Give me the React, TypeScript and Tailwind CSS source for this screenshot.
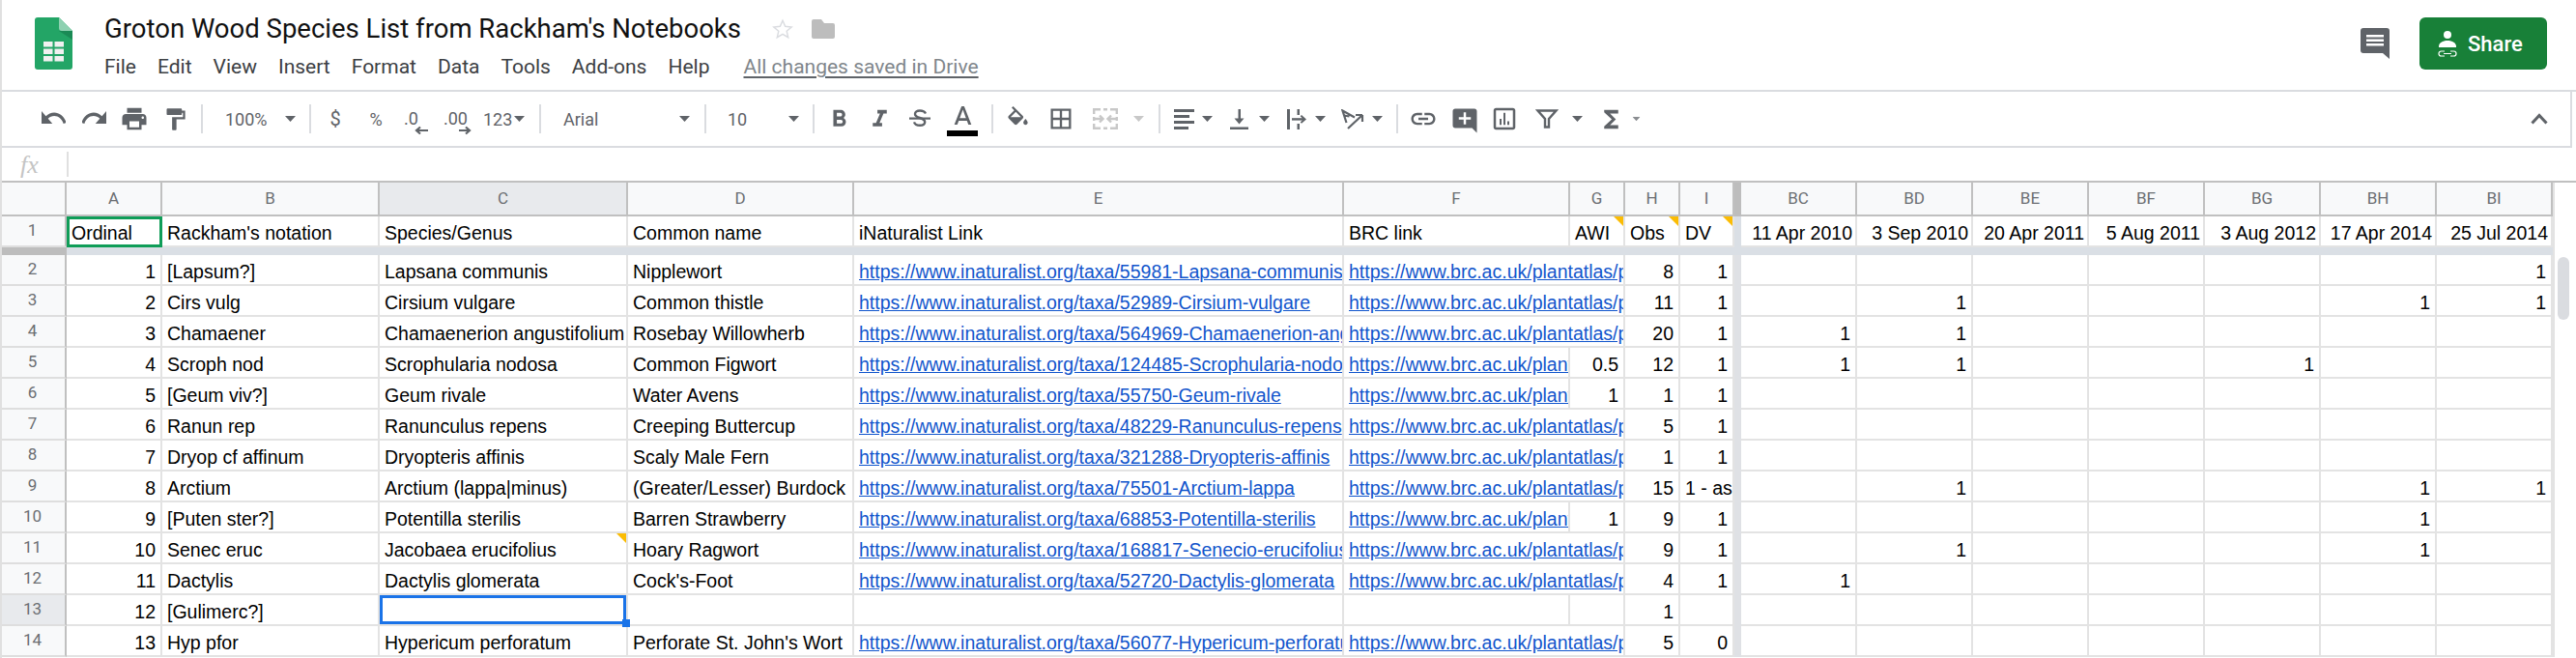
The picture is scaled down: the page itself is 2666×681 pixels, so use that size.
import React from "react";

const ICON = "#5f6368";
const P = ({ d, size = 29, fill = ICON, className = "" }: { d: string; size?: number; fill?: string; className?: string }) => (
  <svg width={size} height={size} viewBox="0 0 24 24" className={className}><path d={d} fill={fill} /></svg>
);
const Caret = ({ fill = ICON, className = "" }: { fill?: string; className?: string }) => (
  <svg width="11" height="6" viewBox="0 0 11 6" className={`shrink-0 ${className}`}><path d="M0 0h11L5.5 6z" fill={fill} /></svg>
);
const Sep = ({ className }: { className: string }) => <div className={`w-[2px] h-[30px] bg-[#dadce0] shrink-0 ${className}`} />;
const Btn = ({ children, className = "" }: { children: React.ReactNode; className?: string }) => (
  <div className={`w-[42px] h-[42px] flex items-center justify-center shrink-0 ${className}`}>{children}</div>
);
const Slot = ({ children, className = "" }: { children: React.ReactNode; className?: string }) => (
  <div className={`w-[30px] h-[42px] flex items-center justify-center shrink-0 ${className}`}>{children}</div>
);

function Toolbar() {
  return (
    <div className="h-[58px] mr-[4px] flex items-center pl-[34px] pr-[23px] border-b-2 border-r-2 border-[#dadce0] text-[18px] text-[#5f6368] font-['Roboto',sans-serif]">
      <Btn><svg width="25" height="16" viewBox="2 7 20 11" preserveAspectRatio="none"><path fill={ICON} d="M12.5 8c-2.65 0-5.05.99-6.9 2.6L2 7v9h9l-3.62-3.62c1.39-1.16 3.16-1.88 5.12-1.88 3.54 0 6.55 2.31 7.6 5.5l2.37-.78C21.08 11.03 17.15 8 12.5 8z" /></svg></Btn>
      <Btn><svg width="25" height="16" viewBox="2 7 20 11" preserveAspectRatio="none" className="-scale-x-100"><path fill={ICON} d="M12.5 8c-2.65 0-5.05.99-6.9 2.6L2 7v9h9l-3.62-3.62c1.39-1.16 3.16-1.88 5.12-1.88 3.54 0 6.55 2.31 7.6 5.5l2.37-.78C21.08 11.03 17.15 8 12.5 8z" /></svg></Btn>
      <Btn><P size={30} d="M19 8H5c-1.66 0-3 1.34-3 3v6h4v4h12v-4h4v-6c0-1.66-1.34-3-3-3zm-3 11H8v-5h8v5zm3-7c-.55 0-1-.45-1-1s.45-1 1-1 1 .45 1 1-.45 1-1 1zm-1-9H6v4h12V3z" /></Btn>
      <Btn><P size={27} d="M18 4V3c0-.55-.45-1-1-1H5c-.55 0-1 .45-1 1v4c0 .55.45 1 1 1h12c.55 0 1-.45 1-1V6h1v4H9v11c0 .55.45 1 1 1h2c.55 0 1-.45 1-1v-9h8V4h-3z" /></Btn>
      <Sep className="ml-[6px]" />
      <span className="ml-[23px] w-[43px]">100%</span>
      <Caret className="ml-[19px]" />
      <Sep className="ml-[14px]" />
      <Btn className="ml-[4px]"><span className="text-[20px]">$</span></Btn>
      <Btn><span className="text-[18px]">%</span></Btn>
      <Btn>
        <svg width="26" height="36" viewBox="0 0 26 36"><text x="0" y="24" fontSize="18" fill={ICON} fontFamily="Roboto">.0</text><path d="M25 30H13M17 26.500l-4 3.500 4 3.500" stroke={ICON} strokeWidth="2.200" fill="none" /></svg>
      </Btn>
      <Btn>
        <svg width="30" height="36" viewBox="0 0 30 36"><text x="1" y="24" fontSize="18" fill={ICON} fontFamily="Roboto">.00</text><path d="M17 30h11M24 26.500l4 3.500-4 3.500" stroke={ICON} strokeWidth="2.200" fill="none" /></svg>
      </Btn>
      <span className="ml-[6px] w-[31px]">123</span>
      <Caret className="ml-[1px]" />
      <Sep className="ml-[15px]" />
      <span className="ml-[23px] w-[38px]">Arial</span>
      <Caret className="ml-[82px]" />
      <Sep className="ml-[15px]" />
      <span className="ml-[22px] w-[20px]">10</span>
      <Caret className="ml-[43px]" />
      <Sep className="ml-[14px]" />
      <Btn className="ml-[4px]"><P size={29} d="M15.6 10.79c.97-.67 1.65-1.77 1.65-2.79 0-2.26-1.75-4-4-4H7v14h7.04c2.09 0 3.71-1.7 3.71-3.79 0-1.52-.86-2.82-2.15-3.42zM10 6.5h3c.83 0 1.5.67 1.5 1.5s-.67 1.5-1.5 1.5h-3v-3zm3.5 9H10v-3h3.5c.83 0 1.5.67 1.5 1.5s-.67 1.5-1.5 1.5z" /></Btn>
      <Btn><P size={29} d="M10 4v3h2.21l-3.42 8H6v3h8v-3h-2.21l3.42-8H18V4z" /></Btn>
      <Btn>
        <svg width="24" height="24" viewBox="0 0 24 24"><path d="M18 6.5C17 4.5 15 3.5 12 3.5c-3 0-5 1.4-5 3.6 0 2 1.5 3 5 3.9 3.5 1 5.2 2 5.2 4.2 0 2.2-2.2 3.6-5.2 3.6-3 0-5.2-1.2-6-3.4" stroke={ICON} strokeWidth="2.4" fill="none" /><rect x="1" y="10.5" width="22" height="2.2" fill={ICON} /></svg>
      </Btn>
      <div className="w-[42px] h-[42px] relative ml-[2px] shrink-0 flex justify-center">
        <svg width="19" height="19" viewBox="5 3 14 14" className="mt-[8px]"><path fill={ICON} d="M11 3L5.5 17h2.25l1.12-3h6.25l1.12 3h2.25L13 3h-2zm-1.38 9L12 5.67 14.38 12H9.62z" /></svg>
        <div className="absolute left-[5px] bottom-[3px] w-[32px] h-[6px] bg-black" />
      </div>
      <Sep className="ml-[9px]" />
      <Btn className="ml-[4px]"><P size={27} d="M16.56 8.94L7.62 0 6.21 1.41l2.38 2.38-5.15 5.15c-.59.59-.59 1.54 0 2.12l5.5 5.5c.29.29.68.44 1.06.44s.77-.15 1.06-.44l5.5-5.5c.59-.58.59-1.53 0-2.12zM5.21 10L10 5.21 14.79 10H5.21zM19 11.5s-2 2.17-2 3.5c0 1.1.9 2 2 2s2-.9 2-2c0-1.33-2-3.5-2-3.5z" /></Btn>
      <Btn className="ml-[3px]"><P size={28} d="M3 3v18h18V3H3zm8 16H5v-6h6v6zm0-8H5V5h6v6zm8 8h-6v-6h6v6zm0-8h-6V5h6v6z" /></Btn>
      <Btn className="ml-[4px]">
        <svg width="26" height="22" viewBox="0 0 26 22" fill="none" stroke="#c8c8c8" strokeWidth="2.4"><path d="M8 1.2H1.2V6M1.2 9v4M1.2 16v4.8H8M18 1.2h6.8V6M24.8 9v4M24.8 16v4.8H18M2 11h8M7 7.5l3.5 3.5L7 14.5M24 11h-8M19 7.5L15.5 11l3.5 3.5M11 1.2h4M11 20.8h4" /></svg>
      </Btn>
      <Caret fill="#c8c8c8" className="ml-[8px]" />
      <Sep className="ml-[15px]" />
      <Slot className="ml-[9px]">
        <svg width="21" height="21" viewBox="0 0 21 21" fill={ICON}><rect x="0" y="0" width="21" height="3" /><rect x="0" y="6" width="16" height="3" /><rect x="0" y="12" width="21" height="3" /><rect x="0" y="18" width="15" height="3" /></svg>
      </Slot>
      <Caret className="ml-[4px]" />
      <Slot className="ml-[12px]">
        <svg width="19" height="21" viewBox="0 0 19 21" fill={ICON}><rect x="0" y="18.5" width="19" height="2.5" /><rect x="8.5" y="0" width="2.5" height="12" /><path d="M4.5 9.5h10L9.5 15.5z" /></svg>
      </Slot>
      <Caret className="ml-[6px]" />
      <Slot className="ml-[13px]">
        <svg width="21" height="21" viewBox="0 0 21 21" fill={ICON}><rect x="0" y="0" width="3" height="21" /><rect x="10.500" y="0" width="2.500" height="6" /><rect x="10.500" y="15" width="2.500" height="6" /><rect x="5" y="9.2" width="12" height="2.400" /><path d="M15 6l5 4.400-5 4.400-1.300-1.300 3-3.100-3-3.100z" /></svg>
      </Slot>
      <Caret className="ml-[4px]" />
      <Slot className="ml-[13px]">
        <svg width="24" height="21" viewBox="0 0 24 21" fill="none" stroke={ICON} strokeWidth="2.2"><path d="M7 20L22 6M22 6h-7M22 6v7" /><path d="M14 8.500L1.500 1.500 5.500 14M3 6.500l5.500 1" /></svg>
      </Slot>
      <Caret className="ml-[5px]" />
      <Sep className="ml-[14px]" />
      <Slot className="ml-[11px]"><P size={32} d="M3.9 12c0-1.71 1.39-3.1 3.1-3.1h4V7H7c-2.76 0-5 2.24-5 5s2.24 5 5 5h4v-1.9H7c-1.71 0-3.1-1.39-3.1-3.1zM8 13h8v-2H8v2zm9-6h-4v1.9h4c1.71 0 3.1 1.39 3.1 3.1s-1.39 3.1-3.1 3.1h-4V17h4c2.76 0 5-2.24 5-5s-2.24-5-5-5z" /></Slot>
      <Slot className="ml-[13px]"><P size={30} className="shrink-0 mt-[4px]" d="M21.99 4c0-1.1-.89-2-1.99-2H4c-1.1 0-2 .9-2 2v12c0 1.1.9 2 2 2h14l4 4-.01-18zM17 11h-4v4h-2v-4H7V9h4V5h2v4h4v2z" /></Slot>
      <Slot className="ml-[11px]"><P size={30} d="M19 3H5c-1.1 0-2 .9-2 2v14c0 1.1.9 2 2 2h14c1.1 0 2-.9 2-2V5c0-1.1-.9-2-2-2zm0 16H5V5h14v14zM8 12h1.6v5H8zm3.2-5h1.6v10h-1.6zm3.2 7H16v3h-1.6z" /></Slot>
      <Slot className="ml-[14px]">
        <svg width="24" height="24" viewBox="0 0 24 24" fill="none" stroke={ICON} strokeWidth="2.4"><path d="M2.5 3.5h19L14 12v8.5h-4V12z" /></svg>
      </Slot>
      <Caret className="ml-[11px]" />
      <Slot className="ml-[14px]"><P size={29} d="M18 4H6v2l6.5 6L6 18v2h12v-3h-7l5-5-5-5h7z" /></Slot>
      <Caret fill="#8a8d91" className="ml-[6px] scale-75" />
      <svg width="18" height="12" viewBox="0 0 18 12" className="ml-auto"><path d="M1.5 10.5L9 2.5l7.5 8" stroke={ICON} strokeWidth="3" fill="none" /></svg>
    </div>
  );
}

function TopBar() {
  return (
    <div className="h-[95px] flex border-b-2 border-[#dadce0] font-['Roboto',sans-serif]">
      <div className="w-[108px] shrink-0 pl-[36px] pt-[18px]">
        <svg width="39" height="54" viewBox="0 0 39 54">
          <path d="M3 0h22l14 14v37a3 3 0 0 1-3 3H3a3 3 0 0 1-3-3V3a3 3 0 0 1 3-3z" fill="#23a566" />
          <path d="M25 14l14 9v-9z" fill="#1a8a55" />
          <path d="M25 0l14 14H28a3 3 0 0 1-3-3z" fill="#8ed1b1" />
          <path fill="#f1f1f1" d="M9 25h9.5v5.5H9zM20.5 25H30v5.5h-9.5zM9 32.5h9.5V38H9zM20.5 32.5H30V38h-9.5zM9 40h9.5v5.5H9zM20.5 40H30v5.5h-9.5z" />
        </svg>
      </div>
      <div className="flex flex-col pt-[12px]">
        <div className="flex items-center h-[36px]">
          <span className="text-[27.5px] text-[#111] w-[657px] whitespace-nowrap">Groton Wood Species List from Rackham's Notebooks</span>
          <svg width="22" height="22" viewBox="0 0 24 24" className="ml-[34px]"><path d="M12 2.5l2.9 6.6 7.1.7-5.4 4.7 1.6 7-6.2-3.7-6.2 3.7 1.6-7L2 9.8l7.1-.7z" fill="none" stroke="#dadce0" strokeWidth="1.6" /></svg>
          <svg width="24" height="20" viewBox="0 0 24 20" className="ml-[19px]"><path d="M2 0h8l3 4h9a2 2 0 0 1 2 2v12a2 2 0 0 1-2 2H2a2 2 0 0 1-2-2V2a2 2 0 0 1 2-2z" fill="#bdbdbd" /></svg>
        </div>
        <div className="flex items-center h-[30px] mt-[7px] text-[21px] text-[#3c4043] gap-[22px] whitespace-nowrap">
          <span>File</span><span>Edit</span><span>View</span><span>Insert</span><span>Format</span><span>Data</span><span>Tools</span><span>Add-ons</span><span>Help</span>
          <span className="ml-[13px] text-[#80868b] underline decoration-[#5f6368] decoration-2 underline-offset-[3px]">All changes saved in Drive</span>
        </div>
      </div>
      <div className="ml-auto flex items-start pt-[18px] pr-[30px]">
        <svg width="30" height="32" viewBox="0 0 30 32" className="mt-[11px]">
          <path d="M3 0h24a3 3 0 0 1 3 3v29l-7-6H3a3 3 0 0 1-3-3V3a3 3 0 0 1 3-3z" fill={ICON} />
          <path d="M6 7h18v2.4H6zM6 11.5h18v2.4H6zM6 16h18v2.4H6z" fill="#fff" />
        </svg>
        <div className="ml-[31px] w-[132px] h-[54px] bg-[#188038] rounded-[6px] flex items-center text-white text-[22px] font-medium">
          <svg width="22" height="28" viewBox="0 0 22 28" className="ml-[18px]" fill="#fff">
            <circle cx="11" cy="5" r="4" />
            <path d="M2 17c0-3.5 4-6 9-6s9 2.500 9 6v1H2z" />
            <path d="M8 22H4.500a2.300 2.300 0 0 0 0 5H8M14 22h3.500a2.300 2.300 0 0 1 0 5H14M7 24.500h8" fill="none" stroke="#fff" strokeWidth="1.2" />
          </svg>
          <span className="ml-[10px]">Share</span>
        </div>
      </div>
    </div>
  );
}

type Row = {
  b: string; c: string; d: string; e?: string; f?: string; g?: string; h: string; i?: string; dates?: number[]; note?: boolean;
};
const INAT = "https://www.inaturalist.org/taxa/";
const BRC = "https://www.brc.ac.uk/plantatlas/plant/";
const rows: Row[] = [
  { b: "[Lapsum?]", c: "Lapsana communis", d: "Nipplewort", e: "55981-Lapsana-communis", f: "lapsana-communis", h: "8", i: "1", dates: [6] },
  { b: "Cirs vulg", c: "Cirsium vulgare", d: "Common thistle", e: "52989-Cirsium-vulgare", f: "cirsium-vulgare", h: "11", i: "1", dates: [1, 5, 6] },
  { b: "Chamaener", c: "Chamaenerion angustifolium", d: "Rosebay Willowherb", e: "564969-Chamaenerion-angustifolium", f: "chamerion-angustifolium", h: "20", i: "1", dates: [0, 1] },
  { b: "Scroph nod", c: "Scrophularia nodosa", d: "Common Figwort", e: "124485-Scrophularia-nodosa", f: "scrophularia-nodosa", g: "0.5", h: "12", i: "1", dates: [0, 1, 4] },
  { b: "[Geum viv?]", c: "Geum rivale", d: "Water Avens", e: "55750-Geum-rivale", f: "geum-rivale", g: "1", h: "1", i: "1" },
  { b: "Ranun rep", c: "Ranunculus repens", d: "Creeping Buttercup", e: "48229-Ranunculus-repens", f: "ranunculus-repens", h: "5", i: "1" },
  { b: "Dryop cf affinum", c: "Dryopteris affinis", d: "Scaly Male Fern", e: "321288-Dryopteris-affinis", f: "dryopteris-affinis", h: "1", i: "1" },
  { b: "Arctium", c: "Arctium (lappa|minus)", d: "(Greater/Lesser) Burdock", e: "75501-Arctium-lappa", f: "arctium-lappa", h: "15", i: "1 - as", dates: [1, 5, 6] },
  { b: "[Puten ster?]", c: "Potentilla sterilis", d: "Barren Strawberry", e: "68853-Potentilla-sterilis", f: "potentilla-sterilis", g: "1", h: "9", i: "1", dates: [5] },
  { b: "Senec eruc", c: "Jacobaea erucifolius", d: "Hoary Ragwort", e: "168817-Senecio-erucifolius", f: "senecio-erucifolius", h: "9", i: "1", dates: [1, 5], note: true },
  { b: "Dactylis", c: "Dactylis glomerata", d: "Cock's-Foot", e: "52720-Dactylis-glomerata", f: "dactylis-glomerata", h: "4", i: "1", dates: [0] },
  { b: "[Gulimerc?]", c: "", d: "", h: "1" },
  { b: "Hyp pfor", c: "Hypericum perforatum", d: "Perforate St. John's Wort", e: "56077-Hypericum-perforatum", f: "hypericum-perforatum", h: "5", i: "0" },
];
const dateHeads = ["BC", "BD", "BE", "BF", "BG", "BH", "BI"];
const dateVals = ["11 Apr 2010", "3 Sep 2010", "20 Apr 2011", "5 Aug 2011", "3 Aug 2012", "17 Apr 2014", "25 Jul 2014"];

const base = "border-r-2 border-b-2 border-[#e3e3e3] pl-[5px] pb-[1px] flex items-end whitespace-nowrap leading-[24px] relative";
const cell = `${base} pr-[5px] overflow-hidden`;
const num = `${cell} justify-end`;
const dateCell = `${base} pr-[3px] overflow-hidden justify-end`;
const head = "border-r-2 border-b-2 border-[#c0c0c0] bg-[#f8f9fa] flex items-center justify-center text-[17px] text-[#6b6e72] font-['Roboto',sans-serif]";
const rowHead = "border-r-2 border-b-2 border-r-[#c0c0c0] border-b-[#dedede] bg-[#f8f9fa] flex items-center justify-center text-[17px] text-[#6b6e72] font-['Roboto',sans-serif]";
const Note = () => <div className="absolute top-0 right-0 w-[10px] h-[10px] bg-[#fbbc04] [clip-path:polygon(0_0,100%_0,100%_100%)]" />;
const Link = ({ href }: { href: string }) => <span className="text-[#1155cc] underline">{href}</span>;

function Sheet() {
  return (
    <div className="flex">
      <div className="grid w-[2642px] grid-cols-[69px_99px_225px_257px_234px_507px_234px_57px_57px_56px_7px_repeat(7,120px)] grid-rows-[35px_32px_8px_repeat(13,32px)] text-[19.5px] text-black font-['Liberation_Sans',Arial,sans-serif]">
        <div className={head} />
        {["A", "B", "C", "D", "E", "F", "G", "H", "I"].map((l) => (
          <div key={l} className={l === "C" ? "border-r-2 border-b-2 border-[#c0c0c0] bg-[#e8eaed] flex items-center justify-center text-[17px] text-[#6b6e72] font-['Roboto',sans-serif]" : head}>{l}</div>
        ))}
        <div className="bg-[#bdbdbd] border-b-2 border-[#bdbdbd]" />
        {dateHeads.map((l) => <div key={l} className={head}>{l}</div>)}

        <div className={rowHead}>1</div>
        <div className={`${cell} outline-[3px] outline-[#0f9d58] -outline-offset-[3px]`}>Ordinal</div>
        <div className={cell}>Rackham's notation</div>
        <div className={cell}>Species/Genus</div>
        <div className={cell}>Common name</div>
        <div className={cell}>iNaturalist Link</div>
        <div className={cell}>BRC link</div>
        <div className={cell}>AWI<Note /></div>
        <div className={cell}>Obs<Note /></div>
        <div className={cell}>DV<Note /></div>
        <div className="bg-[#dadfe5]" />
        {dateVals.map((d) => <div key={d} className={dateCell}>{d}</div>)}

        <div className="bg-[#bdbdbd]" />
        <div className="col-span-17 bg-[#dadfe5]" />

        {rows.map((r, idx) => {
          const sel = idx === 11;
          return (
            <React.Fragment key={idx}>
              <div className={sel ? "border-r-2 border-b-2 border-r-[#c0c0c0] border-b-[#dedede] bg-[#e8eaed] flex items-center justify-center text-[17px] text-[#6b6e72] font-['Roboto',sans-serif]" : rowHead}>{idx + 2}</div>
              <div className={num}>{idx + 1}</div>
              <div className={cell}>{r.b}</div>
              {sel ? (
                <div className={`${base} pr-[5px] z-10`}>
                  <div className="absolute inset-0 border-[3px] border-[#1a73e8]" />
                  <div className="absolute right-[-4px] bottom-[-3px] w-[8px] h-[8px] bg-[#1a73e8]" />
                </div>
              ) : (
                <div className={cell}>
                  {r.c}
                  {r.note && <Note />}
                </div>
              )}
              <div className={cell}>{r.d}</div>
              <div className={cell}>{r.e && <Link href={INAT + r.e} />}</div>
              {r.f && !r.g ? (
                <div className={`${cell} col-span-2`}><Link href={BRC + r.f} /></div>
              ) : (
                <>
                  <div className={cell}>{r.f && <Link href={BRC + r.f} />}</div>
                  <div className={num}>{r.g}</div>
                </>
              )}
              <div className={num}>{r.h}</div>
              <div className={num}>{r.i === "1 - as" ? <span className="-ml-[5px] w-full">1 - as</span> : r.i}</div>
              <div className="bg-[#dfe1e5]" />
              {dateHeads.map((_, j) => (
                <div key={j} className={num}>{r.dates?.includes(j) ? "1" : ""}</div>
              ))}
            </React.Fragment>
          );
        })}
      </div>
      <div className="w-[24px] flex pl-[3px] pt-[77px] border-l-2 border-[#e3e3e3]">
        <div className="w-[12px] h-[65px] bg-[#dadce0] rounded-[6px]" />
      </div>
    </div>
  );
}

export default function App() {
  return (
    <div className="h-[681px] w-[2666px] overflow-hidden bg-white border-l-2 border-[#e0e0e0] box-border">
      <div className="-ml-[2px]">
        <TopBar />
        <Toolbar />
        <div className="h-[36px] flex items-start pl-[21px] pt-[4px] border-b-2 border-[#c0c0c0] box-border">
          <span className="w-[47px] h-[27px] font-['Liberation_Serif',serif] italic text-[26px] leading-[27px] text-[#c4c4c4]">fx</span>
          <div className="w-[2px] h-[26px] bg-[#e0e0e0] ml-[1px]" />
        </div>
        <Sheet />
      </div>
    </div>
  );
}
